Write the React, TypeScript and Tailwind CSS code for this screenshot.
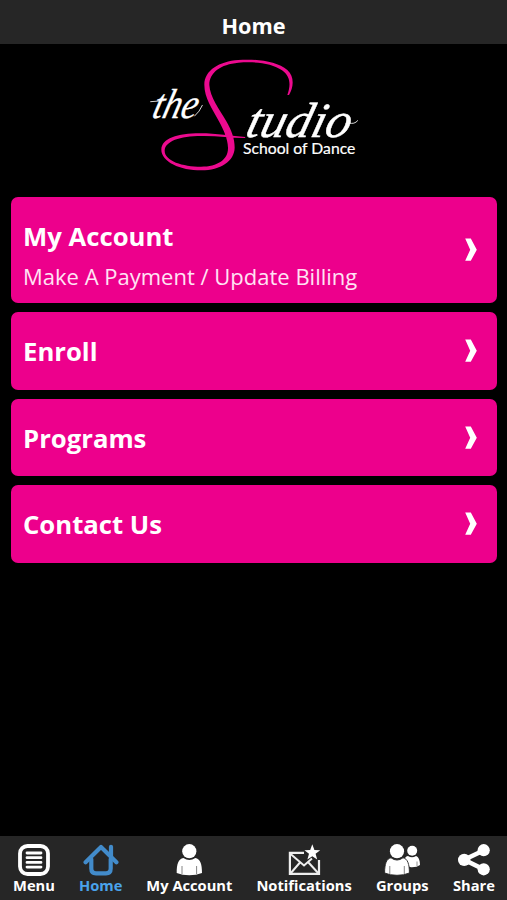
import React from 'react';

interface MenuItem {
  title: string;
  subtitle?: string;
}

const menuItems: MenuItem[] = [
  { title: 'My Account', subtitle: 'Make A Payment / Update Billing' },
  { title: 'Enroll' },
  { title: 'Programs' },
  { title: 'Contact Us' },
];

const Logo: React.FC = () => (
  <svg className="w-[230px] h-[130px]" viewBox="0 0 690 390" role="img" aria-label="the Studio School of Dance">
    <path
      fill="#ec0a8f"
      d="M442 135 C452 107 453 80 426 61 C397 39 345 34 295 38 C242 43 208 67 208 105 C210 142 237 175 259 214 C274 240 284 265 284 293 C283 333 242 361 184 361 C120 361 64 335 64 299 C65 265 112 250 180 250 C230 250 275 258 316 261 L315 264 C270 264 230 257 184 258 C119 258 75 274 74 302 C74 333 128 350 183 350 C234 350 265 328 264 293 C263 265 251 241 238 216 C216 175 193 143 193 104 C193 61 238 34 295 30 C350 26 411 34 442 60 C464 80 461 112 447 135 Z"
    />
    <g fill="#fff" stroke="#fff" fontFamily="'Liberation Serif', serif" fontStyle="italic">
      <text transform="translate(32 205) skewX(-15)" fontSize="126" strokeWidth="0.8" textLength="134" lengthAdjust="spacingAndGlyphs">the</text>
      <text transform="translate(312 260) skewX(-15)" fontSize="148" strokeWidth="1.2" textLength="312" lengthAdjust="spacingAndGlyphs">tudio</text>
    </g>
    <g fill="none" stroke="#fff" strokeWidth="2.5" strokeLinecap="round">
      <path d="M32 155 L72 152" />
      <path d="M164 198 Q179 185 187 166" />
      <path d="M628 219 Q643 224 653 212" />
    </g>
    <text x="309" y="311" fill="#fff" stroke="#fff" strokeWidth="0.6" fontFamily="Lato, sans-serif" fontSize="48" textLength="337" lengthAdjust="spacingAndGlyphs">School of Dance</text>
  </svg>
);

const Chevron: React.FC = () => (
  <svg className="w-3 h-6 shrink-0" viewBox="0 0 12 24" fill="#fff">
    <path d="M0.2 0.6 H5.8 L11.8 11.8 L5.8 22.8 H0.2 L5.2 11.8 Z" />
  </svg>
);

const MenuIcon: React.FC = () => (
  <svg className="w-9 h-8" viewBox="0 0 36 32" fill="none" stroke="#fff" strokeLinecap="round">
    <rect x="4" y="2" width="28" height="28" rx="7.5" strokeWidth="3.8" />
    <path d="M11 9 H25 M11 13.7 H25 M11 18.4 H25 M11 23.1 H25" strokeWidth="2.8" />
  </svg>
);

const HomeIcon: React.FC = () => (
  <svg className="w-9 h-8" viewBox="0 0 36 32" fill="none" stroke="#428bca" strokeWidth="4.2" strokeLinecap="round" strokeLinejoin="round">
    <path d="M2.6 18.3 L18 3 L33.4 18.3" />
    <path d="M28 2.8 V12" />
    <path d="M8.3 15 V24.5 Q8.3 29.3 13 29.3 H23 Q27.7 29.3 27.7 24.5 V15" />
  </svg>
);

const AccountIcon: React.FC = () => (
  <svg className="w-9 h-8" viewBox="0 0 36 32" fill="#fff">
    <circle cx="18.3" cy="7.2" r="7.1" />
    <path d="M5.7 29 C5.7 20 7.4 14.6 12.4 13.9 Q18.3 18.2 24.3 13.9 C29.3 14.6 31 20 31 29 Q25.3 31.3 18.3 31.3 Q11.3 31.3 5.7 29 Z" />
    <path d="M11 22 V30 M25.6 22 V30" stroke="#777" strokeWidth="0.9" />
  </svg>
);

const NotificationsIcon: React.FC = () => (
  <svg className="w-9 h-8" viewBox="0 0 36 32">
    <path d="M18 8.8 H3.9 V29.8 H33 V16" fill="none" stroke="#eee" strokeWidth="2.2" />
    <path d="M4 9.5 L18 21.5 L26 14.5 M4 30 L14 18.5 M33 30 L22.5 18.5" fill="none" stroke="#eee" strokeWidth="2" />
    <path d="M26.3 0.3 L28.4 6 L34.2 6.2 L29.6 9.8 L31.2 15.5 L26.3 12.2 L21.4 15.5 L23 9.8 L18.4 6.2 L24.2 6 Z" fill="#fff" />
  </svg>
);

const GroupsIcon: React.FC = () => (
  <svg className="w-9 h-8" viewBox="0 0 36 32" fill="#fff">
    <circle cx="28.2" cy="6.8" r="5" />
    <path d="M20 21 C20 15 21 12.6 24 11.9 Q28 14.6 32 11.9 C35 12.8 36 17 36 21 Q33 23.5 27 23.3 Z" />
    <path d="M33 17.5 V22" stroke="#777" strokeWidth="0.8" />
    <path d="M0.6 29 C0.6 20 2.4 14.6 7 13.8 Q13 18.3 19 13.8 C23.6 14.6 25.4 20 25.4 29 Q20 31.3 13 31.3 Q6 31.3 0.6 29 Z" stroke="#262626" strokeWidth="0.9" />
    <circle cx="13" cy="7.2" r="7.1" />
    <path d="M5.8 22 V30 M20.3 22 V30" stroke="#777" strokeWidth="0.9" />
  </svg>
);

const ShareIcon: React.FC = () => (
  <svg className="w-9 h-8" viewBox="0 0 36 32" fill="#fff">
    <path d="M27.5 6.5 L8.2 15.8 L27.5 25.3" fill="none" stroke="#fff" strokeWidth="4.6" />
    <circle cx="27.7" cy="6.2" r="6.1" />
    <circle cx="8.2" cy="15.9" r="6.2" />
    <circle cx="27.7" cy="25.3" r="6.1" />
  </svg>
);

const tabs = [
  { label: 'Menu', icon: MenuIcon, width: 'w-[42px]' },
  { label: 'Home', icon: HomeIcon, width: 'w-[43px]', active: true },
  { label: 'My Account', icon: AccountIcon, width: 'w-[86px]' },
  { label: 'Notifications', icon: NotificationsIcon, width: 'w-[95px]' },
  { label: 'Groups', icon: GroupsIcon, width: 'w-[53px]' },
  { label: 'Share', icon: ShareIcon, width: 'w-[42px]' },
];

const App: React.FC = () => {
  return (
    <div className="w-full h-[900px] flex flex-col bg-black text-white font-['Open_Sans',sans-serif] overflow-hidden">
      <header className="h-11 shrink-0 bg-[#262626] flex items-center justify-center pt-2">
        <h1 className="text-[21.7px] leading-7 font-bold">Home</h1>
      </header>

      <main className="flex-1 flex flex-col">
        <div className="pt-1.5 pl-[140px] h-[153px]">
          <Logo />
        </div>
        <div className="flex flex-col gap-[9px] pl-[11px] pr-2.5">
          {menuItems.map(item => (
            <button
              key={item.title}
              type="button"
              className={`flex items-center justify-between w-full rounded-[7px] bg-[#ed008c] pl-3 pr-5 text-left ${
                item.subtitle ? 'h-[106px]' : 'h-[77.7px]'
              }`}
            >
              <span className={`flex flex-col ${item.subtitle ? 'pt-[11px]' : 'pt-0.5'}`}>
                <span className="text-[25.7px] leading-9 font-bold">{item.title}</span>
                {item.subtitle && (
                  <span className="text-[22px] leading-8 mt-[5px] text-[#ffe3f4]">{item.subtitle}</span>
                )}
              </span>
              <Chevron />
            </button>
          ))}
        </div>
      </main>

      <nav className="h-16 shrink-0 bg-[#262626] flex justify-between pl-[13px] pr-3 pt-2">
        {tabs.map(({ label, icon: Icon, width, active }) => (
          <a key={label} className={`flex flex-col items-center ${width}`}>
            <Icon />
            <span className={`-mt-px text-[14.7px] leading-5 font-bold whitespace-nowrap ${active ? 'text-[#4aa3eb]' : ''}`}>
              {label}
            </span>
          </a>
        ))}
      </nav>
    </div>
  );
};

export default App;
